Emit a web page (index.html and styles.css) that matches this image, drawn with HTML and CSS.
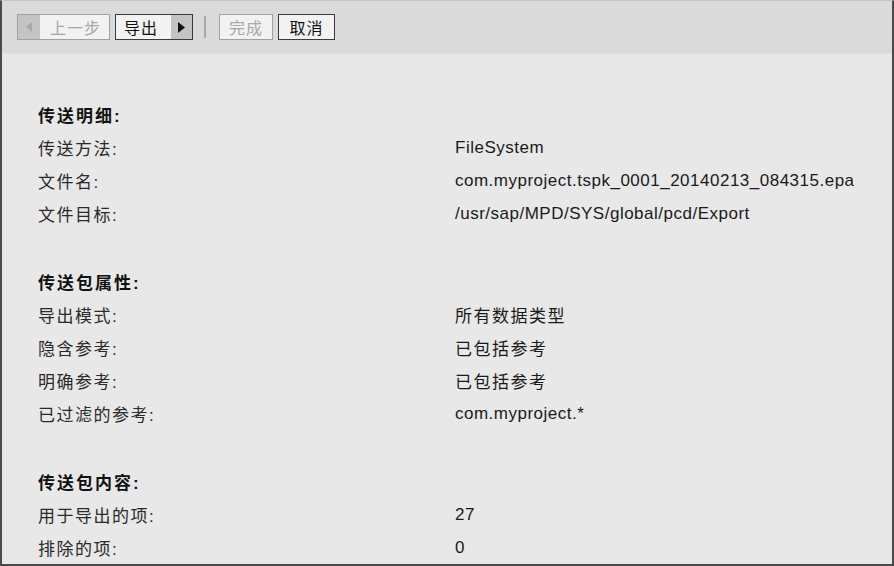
FILE: index.html
```html
<!DOCTYPE html>
<html lang="zh-CN">
<head>
    <meta charset="UTF-8">
    <title>传送包导出</title>
    <link rel="stylesheet" href="styles.css">
</head>
<body>
    <div class="frame">
        <div class="toolbar">
            <div class="btn disabled arrow-left">
                <span class="tri">
                    <svg width="6" height="10" viewBox="0 0 6 10"><path d="M6 0 L0 5 L6 10 Z" fill="#a8a8a8"/></svg>
                </span>
                <span class="cap">上一步</span>
            </div>
            <div class="btn arrow-right">
                <span class="cap">导出</span>
                <span class="tri">
                    <svg width="7" height="11" viewBox="0 0 7 11"><path d="M0 0 L7 5.5 L0 11 Z" fill="#111"/></svg>
                </span>
            </div>
            <div class="sep"></div>
            <div class="btn disabled plain finish"><span class="cap">完成</span></div>
            <div class="btn plain cancel"><span class="cap">取消</span></div>
        </div>

        <div class="details">
            <div class="head">传送明细:</div>
            <div class="row"><span class="key">传送方法:</span><span class="val">FileSystem</span></div>
            <div class="row"><span class="key">文件名:</span><span class="val">com.myproject.tspk_0001_20140213_084315.epa</span></div>
            <div class="row"><span class="key">文件目标:</span><span class="val">/usr/sap/MPD/SYS/global/pcd/Export</span></div>
            <div class="gap"></div>

            <div class="head">传送包属性:</div>
            <div class="row"><span class="key">导出模式:</span><span class="val cjk">所有数据类型</span></div>
            <div class="row"><span class="key">隐含参考:</span><span class="val cjk">已包括参考</span></div>
            <div class="row"><span class="key">明确参考:</span><span class="val cjk">已包括参考</span></div>
            <div class="row"><span class="key">已过滤的参考:</span><span class="val">com.myproject.*</span></div>
            <div class="gap"></div>

            <div class="head">传送包内容:</div>
            <div class="row"><span class="key">用于导出的项:</span><span class="val">27</span></div>
            <div class="row"><span class="key">排除的项:</span><span class="val">0</span></div>
        </div>
    </div>
</body>
</html>
```

FILE: styles.css
```css
body {
    margin: 0;
    font-family: 'Liberation Sans', 'Noto Sans CJK SC', sans-serif;
    font-size: 17px;
    color: #1a1a1a;
    background-color: #e8e8e8;
}
.frame {
    box-sizing: border-box;
    width: 894px;
    height: 566px;
    border: 2px solid #4a4a4a;
    border-top: 1px solid #c4c4c4;
    background-color: #e8e8e8;
    overflow: hidden;
}
.toolbar {
    display: flex;
    align-items: center;
    height: 52px;
    padding-left: 15px;
    background-color: #dadada;
    border-bottom: 1px solid #e0e0e0;
}
.btn {
    display: flex;
    align-items: stretch;
    height: 26px;
    box-sizing: border-box;
    border: 1px solid #3a3a3a;
    background-color: #f2f2f2;
    margin-right: 5px;
    font-size: 16px;
    letter-spacing: 1px;
    color: #111;
}
.btn.disabled {
    border-color: #a0a0a0;
    color: #a8a8a8;
}
.btn .cap {
    display: flex;
    align-items: center;
    padding: 0 6px;
}
.btn .tri {
    display: flex;
    align-items: center;
    justify-content: center;
    width: 22px;
    background-color: #c4c4c4;
}
.btn.plain {
    justify-content: center;
}
.finish {
    width: 54px;
}
.cancel {
    width: 57px;
}
.arrow-left {
    width: 93px;
}
.arrow-left .cap {
    padding-left: 10px;
}
.arrow-right {
    width: 78px;
    justify-content: space-between;
}
.arrow-right .cap {
    padding-left: 8px;
}
.arrow-right .tri {
    width: 21px;
}
.sep {
    width: 2px;
    height: 22px;
    background-color: #a8a8a8;
    margin: 0 13px 0 6px;
}
.details {
    padding: 44px 0 0 36px;
}
.head,
.row {
    display: flex;
    align-items: center;
    height: 33px;
}
.head {
    font-weight: bold;
    color: #111;
    letter-spacing: 2px;
}
.key {
    width: 417px;
    color: #2a2a2a;
    letter-spacing: 1.5px;
}
.val {
    color: #1a1a1a;
    letter-spacing: 0.5px;
}
.val.cjk {
    letter-spacing: 1.5px;
}
.gap {
    height: 35px;
}
```
